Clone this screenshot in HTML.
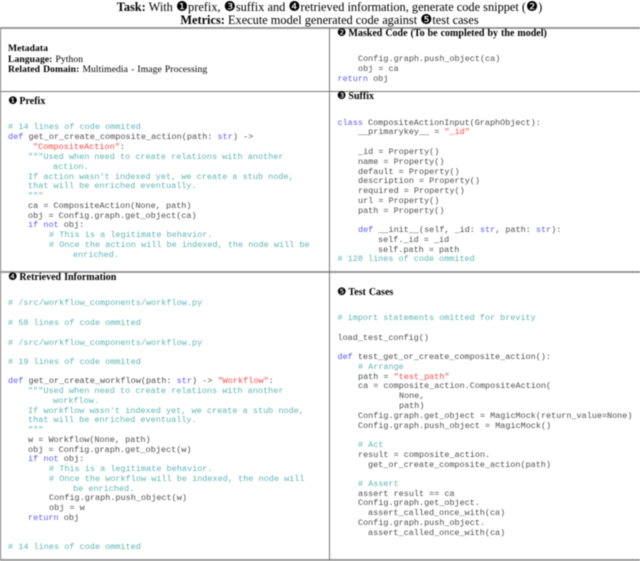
<!DOCTYPE html>
<html><head><meta charset="utf-8"><style>
html,body{margin:0;padding:0;background:#fff;width:640px;height:561px;overflow:hidden}
#w{position:relative;width:640px;height:561px;filter:blur(.4px)}
.c{position:absolute;white-space:pre;font:8.52px/10px "Liberation Mono",monospace;color:#4f4f4f}
.r{font-size:8.47px}
.s{position:absolute;white-space:pre;font:9.6px/11px "Liberation Serif",serif;color:#000;letter-spacing:.08px;word-spacing:.6px}
.k{position:absolute;white-space:pre;font:10px/11px "Liberation Serif",serif;color:#000;word-spacing:.5px}
.k .g{font-size:10.5px;margin-right:-1px}
.t{position:absolute;left:0;width:659px;text-align:center;white-space:pre;font:12.35px/14px "Liberation Serif",serif;color:#000}
.t .g{font-size:13.5px;line-height:14px}
.g{font-family:"DejaVu Sans",sans-serif}
b{font-weight:bold}
i{font-style:normal;color:#5fb5b5}
u{text-decoration:none;color:#5c5cf5}
em{font-style:normal;color:#f54a4a}
.h{position:absolute;background:#777}
</style></head><body><div id="w">
<div class="t" style="top:0"><b>Task:</b> With <span class="g">❶</span>prefix, <span class="g">❸</span>suffix and <span class="g">❹</span>retrieved information, generate code snippet (<span class="g">❷</span>)</div>
<div class="t" style="top:13px"><b>Metrics:</b> Execute model generated code against <span class="g">❺</span>test cases</div>
<div class="h" style="left:0;top:27px;width:640px;height:2px;background:#999"></div>
<div class="h" style="left:0;top:91px;width:640px;height:1px"></div>
<div class="h" style="left:0;top:271px;width:640px;height:2px;background:#999"></div>
<div class="h" style="left:0;top:559px;width:640px;height:2px;background:#999"></div>
<div class="h" style="left:0;top:28px;width:1px;height:532px"></div>
<div class="h" style="left:329px;top:28px;width:1px;height:532px"></div>

<div class="s" style="left:8px;top:43px"><b>Metadata</b></div>
<div class="s" style="left:8px;top:54px"><b>Language:</b> Python</div>
<div class="s" style="left:8px;top:64px"><b>Related Domain:</b> Multimedia - Image Processing</div>

<div class="k" style="left:8px;top:96px"><span class="g">❶</span> <b>Prefix</b></div>
<div class="c" style="left:8px;top:122px"><i># 14 lines of code ommited</i></div>
<div class="c" style="left:8px;top:132px"><u>def</u> get_or_create_composite_action(path: <u>str</u>) -&gt;</div>
<div class="c" style="left:33px;top:142px"><em>"CompositeAction"</em>:</div>
<div class="c" style="left:28px;top:152px"><i>"""Used when need to create relations with another</i></div>
<div class="c" style="left:53px;top:162px"><i>action.</i></div>
<div class="c" style="left:28px;top:171.500px"><i>If action wasn't indexed yet, we create a stub node,</i></div>
<div class="c" style="left:28px;top:181px"><i>that will be enriched eventually.</i></div>
<div class="c" style="left:28px;top:190.500px"><i>"""</i></div>
<div class="c" style="left:28px;top:200.500px">ca = CompositeAction(None, path)</div>
<div class="c" style="left:28px;top:210.500px">obj = Config.graph.get_object(ca)</div>
<div class="c" style="left:28px;top:220px"><u>if not</u> obj:</div>
<div class="c" style="left:49px;top:230px"><i># This is a legitimate behavior.</i></div>
<div class="c" style="left:49px;top:240px"><i># Once the action will be indexed, the node will be</i></div>
<div class="c" style="left:73px;top:249.500px"><i>enriched.</i></div>

<div class="k" style="left:8px;top:272px"><span class="g">❹</span> <b>Retrieved Information</b></div>
<div class="c" style="left:8px;top:298px"><i># /src/workflow_components/workflow.py</i></div>
<div class="c" style="left:8px;top:318px"><i># 58 lines of code ommited</i></div>
<div class="c" style="left:8px;top:337.500px"><i># /src/workflow_components/workflow.py</i></div>
<div class="c" style="left:8px;top:357px"><i># 19 lines of code ommited</i></div>
<div class="c" style="left:8px;top:376px"><u>def</u> get_or_create_workflow(path: <u>str</u>) -&gt; <em>"Workflow"</em>:</div>
<div class="c" style="left:28px;top:386px"><i>"""Used when need to create relations with another</i></div>
<div class="c" style="left:53px;top:395.500px"><i>workflow.</i></div>
<div class="c" style="left:28px;top:405.500px"><i>If workflow wasn't indexed yet, we create a stub node,</i></div>
<div class="c" style="left:28px;top:415px"><i>that will be enriched eventually.</i></div>
<div class="c" style="left:28px;top:424.500px"><i>"""</i></div>
<div class="c" style="left:28px;top:434.500px">w = Workflow(None, path)</div>
<div class="c" style="left:28px;top:444.500px">obj = Config.graph.get_object(w)</div>
<div class="c" style="left:28px;top:454px"><u>if not</u> obj:</div>
<div class="c" style="left:49px;top:464px"><i># This is a legitimate behavior.</i></div>
<div class="c" style="left:49px;top:474px"><i># Once the workflow will be indexed, the node will</i></div>
<div class="c" style="left:73px;top:483.500px"><i>be enriched.</i></div>
<div class="c" style="left:49px;top:493px">Config.graph.push_object(w)</div>
<div class="c" style="left:49px;top:503px">obj = w</div>
<div class="c" style="left:28px;top:512.500px"><u>return</u> obj</div>
<div class="c" style="left:8px;top:542px"><i># 14 lines of code ommited</i></div>

<div class="k" style="left:337px;top:28px"><span class="g">❷</span> <b>Masked Code (To be completed by the model)</b></div>
<div class="c r" style="left:358px;top:54px">Config.graph.push_object(ca)</div>
<div class="c r" style="left:358px;top:64px">obj = ca</div>
<div class="c r" style="left:337.500px;top:73.500px"><u>return</u> obj</div>

<div class="k" style="left:337px;top:91px"><span class="g">❸</span> <b>Suffix</b></div>
<div class="c r" style="left:337.500px;top:117.500px"><u>class</u> CompositeActionInput(GraphObject):</div>
<div class="c r" style="left:358px;top:127px">__primarykey__ = <em>"_id"</em></div>
<div class="c r" style="left:358px;top:147px">_id = Property()</div>
<div class="c r" style="left:358px;top:157px">name = Property()</div>
<div class="c r" style="left:358px;top:166.500px">default = Property()</div>
<div class="c r" style="left:358px;top:176px">description = Property()</div>
<div class="c r" style="left:358px;top:186px">required = Property()</div>
<div class="c r" style="left:358px;top:195.500px">url = Property()</div>
<div class="c r" style="left:358px;top:205.500px">path = Property()</div>
<div class="c r" style="left:358px;top:225px"><u>def</u> __init__(self, _id: <u>str</u>, path: <u>str</u>):</div>
<div class="c r" style="left:378px;top:235px">self._id = _id</div>
<div class="c r" style="left:378px;top:244.500px">self.path = path</div>
<div class="c r" style="left:337.500px;top:254px"><i># 128 lines of code ommited</i></div>

<div class="k" style="left:337px;top:287px"><span class="g">❺</span> <b>Test Cases</b></div>
<div class="c r" style="left:337.500px;top:313px"><i># import statements omitted for brevity</i></div>
<div class="c r" style="left:337.500px;top:332.500px">load_test_config()</div>
<div class="c r" style="left:337.500px;top:352px"><u>def</u> test_get_or_create_composite_action():</div>
<div class="c r" style="left:358px;top:362px"><i># Arrange</i></div>
<div class="c r" style="left:358px;top:371.500px">path = <em>"test_path"</em></div>
<div class="c r" style="left:358px;top:381px">ca = composite_action.CompositeAction(</div>
<div class="c r" style="left:399px;top:391px">None,</div>
<div class="c r" style="left:399px;top:401px">path)</div>
<div class="c r" style="left:358px;top:410.500px">Config.graph.get_object = MagicMock(return_value=None)</div>
<div class="c r" style="left:358px;top:420.500px">Config.graph.push_object = MagicMock()</div>
<div class="c r" style="left:358px;top:439.500px"><i># Act</i></div>
<div class="c r" style="left:358px;top:449.500px">result = composite_action.</div>
<div class="c r" style="left:368px;top:459.500px">get_or_create_composite_action(path)</div>
<div class="c r" style="left:358px;top:478.500px"><i># Assert</i></div>
<div class="c r" style="left:358px;top:488.500px">assert result == ca</div>
<div class="c r" style="left:358px;top:498px">Config.graph.get_object.</div>
<div class="c r" style="left:368px;top:508px">assert_called_once_with(ca)</div>
<div class="c r" style="left:358px;top:517.500px">Config.graph.push_object.</div>
<div class="c r" style="left:368px;top:527.500px">assert_called_once_with(ca)</div>
</div></body></html>
